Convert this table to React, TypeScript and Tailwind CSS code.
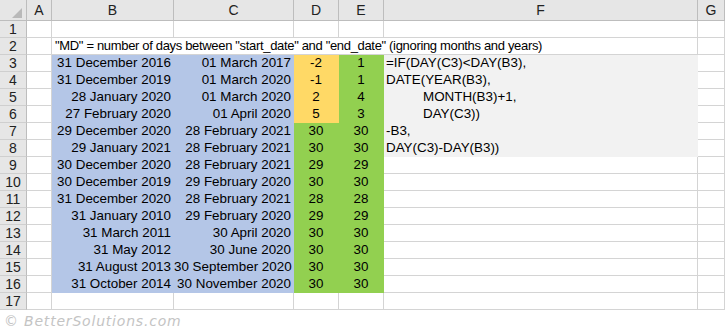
import React from "react";

const W = ["w-[27px]", "w-[25px]", "w-[122px]", "w-[120px]", "w-[45px]", "w-[45px]", "w-[314px]", "w-[27px]"];

type Row = { n: number; b?: string; c?: string; d?: string; e?: string; f?: string; fIndent?: boolean; dOrange?: boolean; fGray?: boolean };

const rows: Row[] = [
  { n: 3, b: "31 December 2016", c: "01 March 2017", d: "-2", e: "1", f: "=IF(DAY(C3)<DAY(B3),", dOrange: true, fGray: true },
  { n: 4, b: "31 December 2019", c: "01 March 2020", d: "-1", e: "1", f: "DATE(YEAR(B3),", dOrange: true, fGray: true },
  { n: 5, b: "28 January 2020", c: "01 March 2020", d: "2", e: "4", f: "MONTH(B3)+1,", fIndent: true, dOrange: true, fGray: true },
  { n: 6, b: "27 February 2020", c: "01 April 2020", d: "5", e: "3", f: "DAY(C3))", fIndent: true, dOrange: true, fGray: true },
  { n: 7, b: "29 December 2020", c: "28 February 2021", d: "30", e: "30", f: "-B3,", fGray: true },
  { n: 8, b: "29 January 2021", c: "28 February 2021", d: "30", e: "30", f: "DAY(C3)-DAY(B3))", fGray: true },
  { n: 9, b: "30 December 2020", c: "28 February 2021", d: "29", e: "29" },
  { n: 10, b: "30 December 2019", c: "29 February 2020", d: "30", e: "30" },
  { n: 11, b: "31 December 2020", c: "28 February 2021", d: "28", e: "28" },
  { n: 12, b: "31 January 2010", c: "29 February 2020", d: "29", e: "29" },
  { n: 13, b: "31 March 2011", c: "30 April 2020", d: "30", e: "30" },
  { n: 14, b: "31 May 2012", c: "30 June 2020", d: "30", e: "30" },
  { n: 15, b: "31 August 2013", c: "30 September 2020", d: "30", e: "30" },
  { n: 16, b: "31 October 2014", c: "30 November 2020", d: "30", e: "30" },
];

const base = "h-[17px] shrink-0 border-r border-b leading-[16px] whitespace-nowrap overflow-hidden";
const grid = "border-[#d4d4d4] bg-white";

function RowHeader({ n }: { n: number }) {
  return (
    <div className={`${W[0]} ${base} bg-[#e6e6e6] border-r-[#bdbdbd] border-b-[#cfcfcf] text-center text-[14px] text-[#222]`}>
      {n}
    </div>
  );
}

function EmptyRow({ n }: { n: number }) {
  return (
    <div className="flex">
      <RowHeader n={n} />
      {W.slice(1).map((w, i) => (
        <div key={i} className={`${w} ${base} ${grid}`} />
      ))}
    </div>
  );
}

export default function App() {
  const letters = ["A", "B", "C", "D", "E", "F", "G"];
  return (
    <div className="w-[725px] h-[331px] bg-white overflow-hidden text-black" style={{ fontFamily: '"Liberation Sans", Arial, sans-serif' }}>
      {/* header */}
      <div className="flex">
        <div className={`${W[0]} h-[21px] shrink-0 border-r border-b border-[#bdbdbd] bg-[#e6e6e6] relative`}>
          <svg className="absolute left-[12px] top-[8px]" width="11" height="11" viewBox="0 0 11 11">
            <polygon points="10,0 10,10 0,10" fill="#b9b9b9" />
          </svg>
        </div>
        {letters.map((l, i) => (
          <div key={l} className={`${W[i + 1]} h-[21px] shrink-0 border-r border-b border-[#bdbdbd] bg-[#e6e6e6] text-center text-[14px] leading-[21px] text-[#222]`}>
            {l}
          </div>
        ))}
      </div>
      <EmptyRow n={1} />
      {/* row 2 */}
      <div className="flex">
        <RowHeader n={2} />
        <div className={`${W[1]} ${base} ${grid}`} />
        <div className={`w-[646px] ${base} ${grid} text-[13px] tracking-[-0.33px] pl-[3px]`}>
          "MD" = number of days between "start_date" and "end_date" (ignoring months and years)
        </div>
        <div className={`${W[7]} ${base} ${grid}`} />
      </div>
      {rows.map((r) => (
        <div key={r.n} className="flex">
          <RowHeader n={r.n} />
          <div className={`${W[1]} ${base} ${grid}`} />
          <div className={`${W[2]} ${base} bg-[#b4c6e7] border-[#b4c6e7] text-right pr-[2px] text-[13.4px]`}>{r.b}</div>
          <div className={`${W[3]} ${base} bg-[#b4c6e7] border-[#b4c6e7] text-right pr-[2px] text-[13.4px]`}>{r.c}</div>
          <div className={`${W[4]} ${base} ${r.dOrange ? "bg-[#ffd966] border-[#ffd966]" : "bg-[#92d050] border-[#92d050]"} text-center text-[13.4px]`}>{r.d}</div>
          <div className={`${W[5]} ${base} bg-[#92d050] border-[#92d050] text-center text-[13.4px]`}>{r.e}</div>
          <div className={`${W[6]} ${base} ${r.fGray ? "bg-[#f2f2f2] border-[#f2f2f2]" : grid} text-[13.4px] ${r.fIndent ? "pl-[39px]" : "pl-[2px]"}`}>{r.f}</div>
          <div className={`${W[7]} ${base} ${grid}`} />
        </div>
      ))}
      <EmptyRow n={17} />
      <div
        className="pl-[4px] pt-[1px] text-[14px] leading-[20px] italic tracking-[0.8px] text-[#c4c4c4]"
        style={{ fontFamily: '"DejaVu Sans", sans-serif' }}
      >
        © BetterSolutions.com
      </div>
    </div>
  );
}
